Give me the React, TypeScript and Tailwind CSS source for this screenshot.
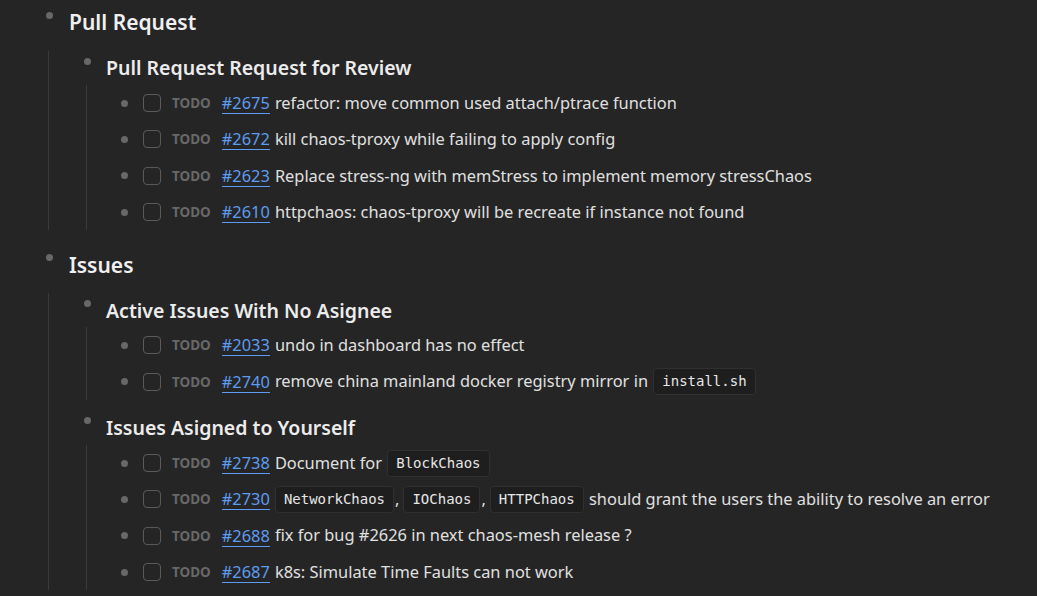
import React from "react";

type Part = string | { code: string };

interface Task {
  num: string;
  parts: Part[];
}

const pullRequests: Task[] = [
  { num: "2675", parts: ["refactor: move common used attach/ptrace function"] },
  { num: "2672", parts: ["kill chaos-tproxy while failing to apply config"] },
  { num: "2623", parts: ["Replace stress-ng with memStress to implement memory stressChaos"] },
  { num: "2610", parts: ["httpchaos: chaos-tproxy will be recreate if instance not found"] },
];

const noAssignee: Task[] = [
  { num: "2033", parts: ["undo in dashboard has no effect"] },
  { num: "2740", parts: ["remove china mainland docker registry mirror in ", { code: "install.sh" }] },
];

const assigned: Task[] = [
  { num: "2738", parts: ["Document for ", { code: "BlockChaos" }] },
  {
    num: "2730",
    parts: [
      { code: "NetworkChaos" },
      ",",
      { code: "IOChaos" },
      ",",
      { code: "HTTPChaos" },
      " should grant the users the ability to resolve an error",
    ],
  },
  { num: "2688", parts: ["fix for bug #2626 in next chaos-mesh release ?"] },
  { num: "2687", parts: ["k8s: Simulate Time Faults can not work"] },
];

function Bullet({ top }: { top?: string }) {
  return (
    <div className={`w-[20px] shrink-0 flex justify-center ${top ?? ""}`}>
      <span className="block w-[7px] h-[7px] rounded-full bg-[#686868]" />
    </div>
  );
}

function TaskRow({ task }: { task: Task }) {
  return (
    <div className="flex items-center h-[36.33px]">
      <Bullet />
      <div className="ml-[9px] w-[18px] h-[18px] rounded-[4px] border-[1.5px] border-[#5a5a5a] shrink-0" />
      <span className="ml-[11px] text-[13.5px] font-bold text-[#686868]">TODO</span>
      <span className="ml-[11px] text-[#5d9cf0] border-b border-[#5d9cf0] leading-[20px] pt-[1px]">
        #{task.num}
      </span>
      <span className="ml-[4px] flex items-center whitespace-pre">
        {typeof task.parts[0] === "string" && <span className="w-[1px]" />}
        {task.parts.map((p, i) =>
          typeof p === "string" ? (
            <span key={i} className={p === "," ? "mr-[3px]" : ""}>
              {p}
            </span>
          ) : (
            <code
              key={i}
              className="mx-[1px] px-[8px] h-[27px] flex items-center rounded-[4px] bg-[#1e1e1e] border border-[#303030] text-[14px] text-[#e6e6e6] font-['DejaVu_Sans_Mono','Liberation_Mono',monospace]"
            >
              {p.code}
            </code>
          )
        )}
      </span>
    </div>
  );
}

function Section({ title, tasks }: { title: string; tasks: Task[] }) {
  return (
    <div>
      <div className="flex items-center h-[34px] mt-[11px]">
        <Bullet top="-mt-[14px]" />
        <h3 className="ml-[9px] text-[19.5px] font-semibold text-[#ececec]">{title}</h3>
      </div>
      <div className="ml-[9px] border-l border-[#3a3a3a] pl-[27px]">
        {tasks.map((t) => (
          <TaskRow key={t.num} task={t} />
        ))}
      </div>
    </div>
  );
}

function Group({ title, children, className }: { title: string; children: React.ReactNode; className?: string }) {
  return (
    <div className={className}>
      <div className="flex items-center h-[36px]">
        <Bullet top="-mt-[14px]" />
        <h2 className="ml-[10px] pt-[2px] text-[21px] font-semibold text-[#f0f0f0]">{title}</h2>
      </div>
      <div className="ml-[9px] border-l border-[#3a3a3a] pl-[28px]">{children}</div>
    </div>
  );
}

export default function App() {
  return (
    <div className="w-[1037px] h-[596px] overflow-hidden bg-[#252525] text-[#e0e0e0] text-[16.4px] font-['Noto_Sans','Open_Sans',sans-serif] pt-[4px] pl-[39px]">
      <Group title="Pull Request">
        <Section title="Pull Request Request for Review" tasks={pullRequests} />
      </Group>
      <Group title="Issues" className="mt-[16px]">
        <Section title="Active Issues With No Asignee" tasks={noAssignee} />
        <Section title="Issues Asigned to Yourself" tasks={assigned} />
      </Group>
    </div>
  );
}
